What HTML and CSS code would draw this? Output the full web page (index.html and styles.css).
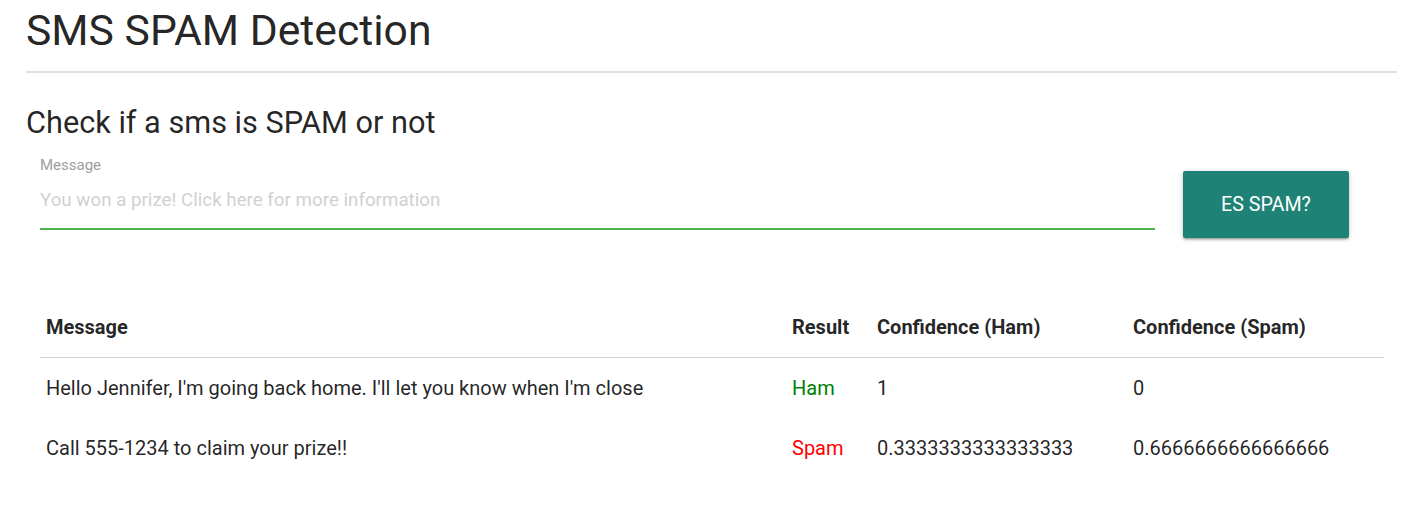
FILE: index.html
```html
<!DOCTYPE html>
<html>
<head>
<meta charset="utf-8">
<link rel="stylesheet" href="styles.css">
</head>
<body>
<div class="page">
  <h1 class="title">SMS SPAM Detection</h1>
  <hr class="rule">
  <h2 class="subtitle">Check if a sms is SPAM or not</h2>
  <div class="form-row">
    <div class="field">
      <label class="field-label">Message</label>
      <input class="field-input" type="text" placeholder="You won a prize! Click here for more information">
    </div>
    <button class="btn">ES SPAM?</button>
  </div>
  <table class="results">
    <thead>
      <tr>
        <th class="c-msg">Message</th>
        <th class="c-res">Result</th>
        <th class="c-ham">Confidence (Ham)</th>
        <th class="c-spam">Confidence (Spam)</th>
      </tr>
    </thead>
    <tbody>
      <tr>
        <td>Hello Jennifer, I'm going back home. I'll let you know when I'm close</td>
        <td class="ham">Ham</td>
        <td>1</td>
        <td>0</td>
      </tr>
      <tr>
        <td>Call 555-1234 to claim your prize!!</td>
        <td class="spam">Spam</td>
        <td>0.3333333333333333</td>
        <td>0.6666666666666666</td>
      </tr>
    </tbody>
  </table>
</div>
</body>
</html>
```

FILE: styles.css
```css
html, body {
  margin: 0;
  padding: 0;
  background: #fff;
}
body {
  font-family: Roboto, "Liberation Sans", sans-serif;
  color: rgba(0, 0, 0, 0.87);
}
.page {
  padding: 0 28px 0 26px;
}
.title {
  font-size: 42.7px;
  font-weight: 400;
  line-height: 60px;
  margin: 0;
}
.rule {
  border: 0;
  border-top: 2px solid #e0e0e0;
  margin: 11px 0 0 0;
}
.subtitle {
  font-size: 30.7px;
  font-weight: 400;
  line-height: 40px;
  margin: 30px 0 0 0;
}
.form-row {
  display: flex;
  align-items: flex-start;
  padding-left: 14px;
  margin-top: 11px;
}
.field {
  width: 1115px;
  display: flex;
  flex-direction: column;
  padding-top: 1px;
}
.field-label {
  font-size: 15px;
  color: #9e9e9e;
  line-height: 20px;
}
.field-input {
  box-sizing: border-box;
  font-family: Roboto, "Liberation Sans", sans-serif;
  font-size: 18.75px;
  border: 0;
  border-bottom: 1px solid #4caf50;
  box-shadow: 0 1px 0 0 #4caf50;
  outline: none;
  padding: 0 0 3px 0;
  height: 54px;
  margin: 0;
  color: rgba(0, 0, 0, 0.87);
  background: transparent;
}
.field-input::placeholder {
  color: #d1d1d1;
}
.btn {
  margin-left: 28px;
  margin-top: 17px;
  width: 166px;
  height: 67px;
  border: 0;
  border-radius: 2px;
  background: #1e8276;
  color: #fff;
  font-family: Roboto, "Liberation Sans", sans-serif;
  font-size: 19.7px;
  box-shadow: 0 2px 2px 0 rgba(0,0,0,0.14), 0 3px 1px -2px rgba(0,0,0,0.12), 0 1px 5px 0 rgba(0,0,0,0.2);
}
.results {
  margin: 59px 13px 0 14px;
  width: 1344px;
  border-collapse: collapse;
  font-size: 20px;
}
.results th, .results td {
  text-align: left;
  padding: 0 6px;
  height: 60px;
  vertical-align: middle;
}
.results th {
  font-weight: 700;
}
.results thead tr {
  border-bottom: 1px solid #d0d0d0;
}
.c-msg { width: 734px; }
.c-res { width: 73px; }
.c-ham { width: 244px; }
.ham { color: #008000; }
.spam { color: #ff0000; }
```
